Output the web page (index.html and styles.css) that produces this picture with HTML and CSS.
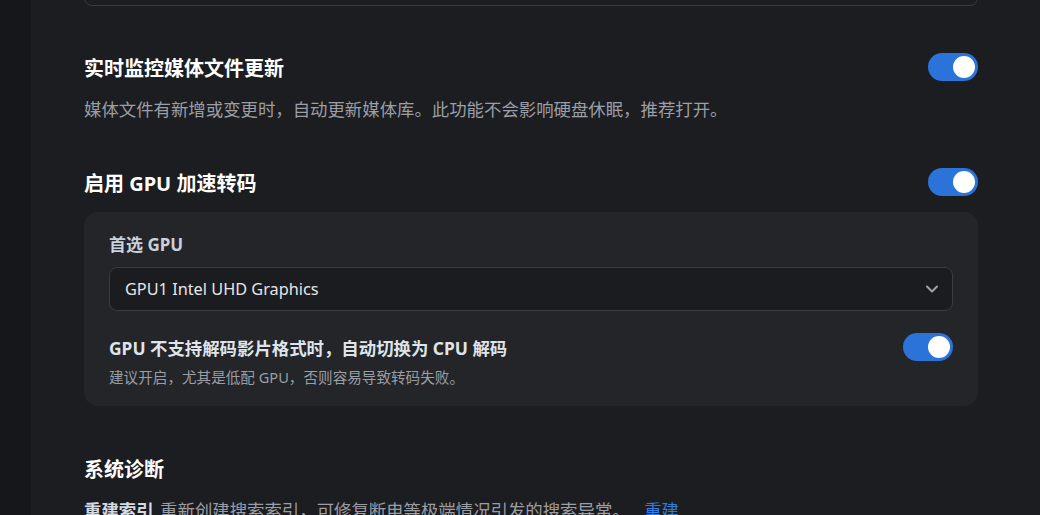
FILE: index.html
```html
<!DOCTYPE html>
<html lang="zh-CN">
<head>
  <meta charset="UTF-8" />
  <title>媒体库设置</title>
  <link rel="stylesheet" href="styles.css">
</head>
<body>
  <div class="layout">
    <aside class="sidebar"></aside>

    <main class="content">
      <div class="prev-box"></div>

      <section class="setting">
        <div class="setting-row">
          <h2>实时监控媒体文件更新</h2>
          <span class="toggle on"><span class="knob"></span></span>
        </div>
        <p class="desc">媒体文件有新增或变更时，自动更新媒体库。此功能不会影响硬盘休眠，推荐打开。</p>
      </section>

      <section class="setting">
        <div class="setting-row">
          <h2>启用 GPU 加速转码</h2>
          <span class="toggle on"><span class="knob"></span></span>
        </div>

        <div class="panel">
          <label class="field-label">首选 GPU</label>
          <div class="select">
            <span>GPU1 Intel UHD Graphics</span>
            <svg class="chevron" width="14" height="14" viewBox="0 0 14 14">
              <path d="M2 4.5 L7 9.5 L12 4.5" fill="none" stroke="#a0a2a6" stroke-width="2" stroke-linecap="round" stroke-linejoin="round"/>
            </svg>
          </div>

          <div class="sub-row">
            <h3>GPU 不支持解码影片格式时，自动切换为 CPU 解码</h3>
            <span class="toggle on"><span class="knob"></span></span>
          </div>
          <p class="hint">建议开启，尤其是低配 GPU，否则容易导致转码失败。</p>
        </div>
      </section>

      <section class="setting diagnostics">
        <div class="setting-row">
          <h2>系统诊断</h2>
        </div>
        <p class="diag">
          <strong>重建索引</strong>
          <span>重新创建搜索索引，可修复断电等极端情况引发的搜索异常。</span>
          <a href="#">重建</a>
        </p>
      </section>
    </main>
  </div>
</body>
</html>
```

FILE: styles.css
```css
body {
  margin: 0;
  background: #1b1d21;
  color: #fff;
  font-family: "Noto Sans", "Noto Sans CJK SC", sans-serif;
  overflow: hidden;
}

.layout {
  display: flex;
  height: 515px;
}

.sidebar {
  width: 31px;
  flex-shrink: 0;
  background: #16171a;
}

.content {
  flex: 1;
  padding: 0 62px 0 53px;
}

.prev-box {
  height: 44px;
  margin-top: -40px;
  border: 1px solid #383a3f;
  border-radius: 8px;
}

.setting {
  margin-top: 47px;
}

.setting.diagnostics {
  margin-top: 48px;
}

.setting-row {
  display: flex;
  justify-content: space-between;
  align-items: center;
  height: 28px;
}

.setting-row h2 {
  margin: 0;
  font-size: 20px;
  font-weight: 700;
  color: #fff;
}

.desc {
  margin: 16px 0 0;
  font-size: 17.4px;
  line-height: 24px;
  color: #9b9ea4;
}

.toggle {
  display: flex;
  justify-content: flex-end;
  align-items: center;
  width: 50px;
  height: 28px;
  padding: 0 3px;
  box-sizing: border-box;
  border-radius: 14px;
  background: #2b73d9;
}

.knob {
  width: 22px;
  height: 22px;
  border-radius: 50%;
  background: #fff;
}

.panel {
  margin-top: 16px;
  padding: 21px 25px 19px;
  background: #232529;
  border-radius: 14px;
}

.field-label {
  display: block;
  font-size: 17px;
  line-height: 24px;
  font-weight: 700;
  color: #c9d1dc;
}

.select {
  display: flex;
  justify-content: space-between;
  align-items: center;
  height: 44px;
  margin-top: 10px;
  padding: 0 13px 0 15px;
  box-sizing: border-box;
  background: #1b1c20;
  border: 1px solid #3a3c41;
  border-radius: 8px;
  font-size: 16.3px;
  color: #e6e6e6;
}

.sub-row {
  display: flex;
  justify-content: space-between;
  align-items: center;
  height: 28px;
  margin-top: 22px;
}

.sub-row h3 {
  margin: 0;
  font-size: 17.4px;
  font-weight: 700;
  color: #dfe4ea;
}

.hint {
  margin: 6px 0 0;
  font-size: 14.6px;
  line-height: 20px;
  color: #9b9ea4;
}

.diag {
  margin: 16px 0 0;
  font-size: 17.4px;
  line-height: 24px;
  color: #9b9ea4;
}

.diag strong {
  color: #d5dae0;
  margin-right: 2px;
}

.diag a {
  margin-left: 10px;
  color: #2f7de1;
  text-decoration: none;
}
```
